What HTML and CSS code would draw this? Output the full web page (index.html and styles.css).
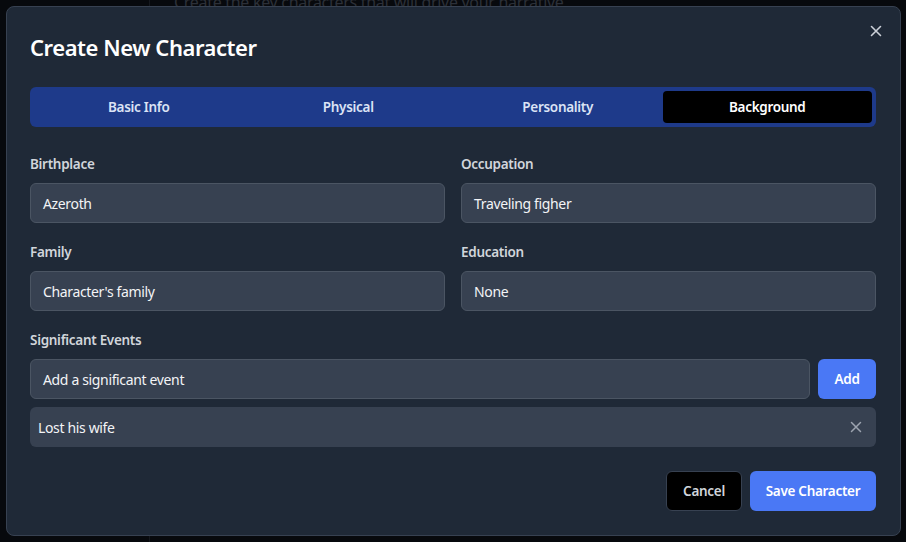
FILE: index.html
```html
<!DOCTYPE html>
<html>
<head>
<meta charset="utf-8">
<link rel="stylesheet" href="styles.css">
</head>
<body>
<div class="backdrop">
  <div class="bg-side"></div>
  <p class="bg-sub">Create the key characters that will drive your narrative</p>
</div>
<div class="overlay">
  <div class="modal">
    <button class="close" aria-label="Close">
      <svg width="14" height="14" viewBox="0 0 14 14"><path d="M2.5 2.5 L11.5 11.5 M11.5 2.5 L2.5 11.5" stroke="#cbd0d8" stroke-width="1.6" stroke-linecap="round"/></svg>
    </button>
    <h2 class="title">Create New Character</h2>
    <div class="tabs">
      <div class="tab">Basic Info</div>
      <div class="tab">Physical</div>
      <div class="tab">Personality</div>
      <div class="tab active">Background</div>
    </div>
    <div class="grid">
      <div class="field">
        <label class="label">Birthplace</label>
        <div class="input">Azeroth</div>
      </div>
      <div class="field">
        <label class="label">Occupation</label>
        <div class="input">Traveling figher</div>
      </div>
      <div class="field">
        <label class="label">Family</label>
        <div class="input">Character's family</div>
      </div>
      <div class="field">
        <label class="label">Education</label>
        <div class="input">None</div>
      </div>
    </div>
    <div class="field events">
      <label class="label">Significant Events</label>
      <div class="add-row">
        <div class="input grow">Add a significant event</div>
        <button class="btn primary add">Add</button>
      </div>
      <div class="event">
        <span>Lost his wife</span>
        <svg width="14" height="14" viewBox="0 0 14 14"><path d="M2.5 2.5 L11.5 11.5 M11.5 2.5 L2.5 11.5" stroke="#9ca3af" stroke-width="1.5" stroke-linecap="round"/></svg>
      </div>
    </div>
    <div class="footer">
      <button class="btn cancel">Cancel</button>
      <button class="btn primary save">Save Character</button>
    </div>
  </div>
</div>
</body>
</html>
```
FILE: styles.css
```css
* { box-sizing: border-box; }
html, body { margin: 0; padding: 0; }
body {
  width: 906px;
  height: 542px;
  background: #07090d;
  font-family: "Noto Sans", "Open Sans", sans-serif;
  overflow: hidden;
  position: relative;
}
.backdrop {
  position: absolute;
  inset: 0;
  display: flex;
}
.bg-side {
  width: 150px;
  border-right: 1px solid #15181e;
  height: 100%;
}
.bg-sub {
  margin: -9px 0 0 24px;
  font-size: 16px;
  color: #2c3038;
  letter-spacing: -0.3px;
}
.overlay {
  position: absolute;
  inset: 0;
  padding: 6px 5px 6px 6px;
}
.modal {
  position: relative;
  height: 530px;
  background: #1f2937;
  border: 1px solid #374151;
  border-radius: 8px;
  padding: 24px 24px 23px 23px;
  color: #f3f4f6;
}
.close {
  position: absolute;
  top: 16px;
  right: 16px;
  width: 16px;
  height: 16px;
  padding: 0;
  border: 0;
  background: transparent;
  display: flex;
  align-items: center;
  justify-content: center;
}
.title {
  margin: 0 0 24px;
  font-size: 22px;
  line-height: 32px;
  font-weight: 600;
  color: #ffffff;
  letter-spacing: -0.45px;
}
.tabs {
  display: grid;
  grid-template-columns: repeat(4, 1fr);
  background: #1e3a8a;
  border-radius: 6px;
  padding: 4px;
  height: 40px;
}
.tab {
  display: flex;
  align-items: center;
  justify-content: center;
  font-size: 13.5px;
  font-weight: 600;
  color: #dbe3f5;
  border-radius: 4px;
  letter-spacing: -0.3px;
}
.tab.active {
  background: #000000;
  color: #ffffff;
}
.grid {
  margin-top: 27px;
  display: grid;
  grid-template-columns: 1fr 1fr;
  column-gap: 16px;
  row-gap: 19px;
}
.field {
  display: flex;
  flex-direction: column;
  gap: 9px;
}
.label {
  font-size: 13.5px;
  line-height: 20px;
  font-weight: 600;
  color: #d1d5db;
  letter-spacing: -0.3px;
}
.input {
  height: 40px;
  background: #374151;
  border: 1px solid #4b5563;
  border-radius: 6px;
  padding: 0 12px;
  display: flex;
  align-items: center;
  font-size: 14px;
  color: #f3f4f6;
  letter-spacing: -0.35px;
}
.events { margin-top: 19px; }
.add-row {
  display: flex;
  gap: 8px;
}
.grow { flex: 1; }
.btn {
  height: 40px;
  border-radius: 6px;
  font-family: inherit;
  font-size: 13.5px;
  font-weight: 600;
  padding: 0 16px;
  border: 0;
  letter-spacing: -0.3px;
}
.primary {
  background: #4a78f5;
  color: #ffffff;
}
.add { width: 58px; padding: 0; }
.save { width: 126px; padding: 0; }
.event {
  margin-top: -1px;
  height: 40px;
  background: #374151;
  border-radius: 6px;
  padding: 0 13px 0 8px;
  display: flex;
  align-items: center;
  justify-content: space-between;
  font-size: 14px;
  color: #f3f4f6;
  letter-spacing: -0.35px;
}
.footer {
  margin-top: 24px;
  display: flex;
  justify-content: flex-end;
  gap: 8px;
}
.cancel {
  background: #000000;
  border: 1px solid #374151;
  color: #d1d5db;
  width: 76px;
  padding: 0;
}
```
